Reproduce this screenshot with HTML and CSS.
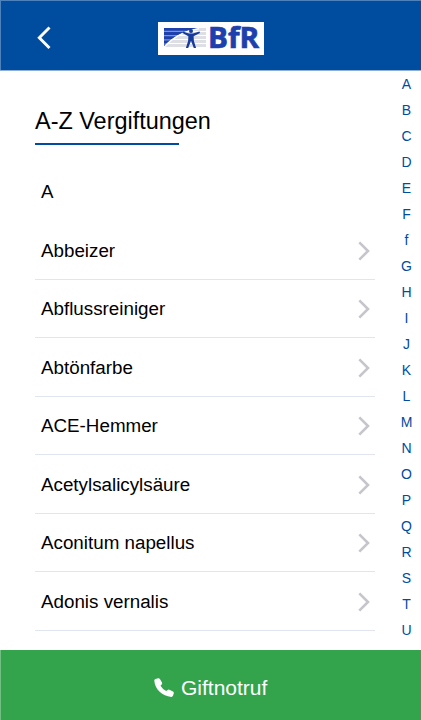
FILE: index.html
```html
<!DOCTYPE html>
<html lang="de">
<head>
<meta charset="utf-8">
<title>A-Z Vergiftungen</title>
<link rel="stylesheet" href="styles.css">
</head>
<body>
<div class="app">
  <header class="header">
    <svg class="back" viewBox="0 0 14 24"><path d="M12.5 1.5 2.3 11.7 12.5 22"/></svg>
    <svg class="logo" viewBox="0 0 106 33">
      <defs><clipPath id="arc"><path d="M6 6H40C26 8.500 14 15 6 24.500Z"/></clipPath></defs>
      <rect width="106" height="33" fill="#fff"/>
      <path d="M6 7.500h42M6 11.500h42M6 15.500h42M6 19.500h42M6 23.500h42" stroke="#dddfe4" stroke-width="3"/>
      <g clip-path="url(#arc)">
        <path d="M6 6h40v20H6z" fill="#7d94d2"/>
        <path d="M6 7.300h42M6 11.500h42M6 15.700h42M6 19.900h42M6 24h42" stroke="#1d40ad" stroke-width="3"/>
      </g>
      <path d="M6 25.200C14 15.800 26 9.300 41 6.600" fill="none" stroke="#fff" stroke-width="1.300"/>
      <g fill="#173b9c">
        <circle cx="33" cy="9" r="2"/>
        <path d="M25 9.500 31 11.500h4l6.500-2 .5 1.500-6.400 3.200.3 4.800 2.200 7h-2.300l-2.800-7.200-2.800 7.200h-2.300l2.200-7 .3-4.800-5.900-3.200Z"/>
      </g>
      <text class="logo-text" x="50" y="26" textLength="51" lengthAdjust="spacingAndGlyphs">BfR</text>
    </svg>
  </header>
  <main class="main">
    <section class="content">
      <h1 class="title">A-Z Vergiftungen</h1>
      <h2 class="letter">A</h2>
      <ul class="list">
        <li class="row"><span>Abbeizer</span><svg class="chevron" viewBox="0 0 12 20"><path d="m1.3 1.3 8.7 8.7-8.7 8.7"/></svg></li>
        <li class="row"><span>Abflussreiniger</span><svg class="chevron" viewBox="0 0 12 20"><path d="m1.3 1.3 8.7 8.7-8.7 8.7"/></svg></li>
        <li class="row"><span>Abtönfarbe</span><svg class="chevron" viewBox="0 0 12 20"><path d="m1.3 1.3 8.7 8.7-8.7 8.7"/></svg></li>
        <li class="row"><span>ACE-Hemmer</span><svg class="chevron" viewBox="0 0 12 20"><path d="m1.3 1.3 8.7 8.7-8.7 8.7"/></svg></li>
        <li class="row"><span>Acetylsalicylsäure</span><svg class="chevron" viewBox="0 0 12 20"><path d="m1.3 1.3 8.7 8.7-8.7 8.7"/></svg></li>
        <li class="row"><span>Aconitum napellus</span><svg class="chevron" viewBox="0 0 12 20"><path d="m1.3 1.3 8.7 8.7-8.7 8.7"/></svg></li>
        <li class="row"><span>Adonis vernalis</span><svg class="chevron" viewBox="0 0 12 20"><path d="m1.3 1.3 8.7 8.7-8.7 8.7"/></svg></li>
      </ul>
    </section>
    <nav class="index">
      <span>A</span><span>B</span><span>C</span><span>D</span><span>E</span><span>F</span><span>f</span><span>G</span><span>H</span><span>I</span><span>J</span><span>K</span><span>L</span><span>M</span><span>N</span><span>O</span><span>P</span><span>Q</span><span>R</span><span>S</span><span>T</span><span>U</span>
    </nav>
  </main>
  <footer class="call">
    <svg class="phone" viewBox="0 0 20 20"><path d="M1.500 1 4 .2Q5.200 0 5.900 1L8 4.500Q8.500 5.600 7.700 6.400L6.500 7.700Q8.500 11.200 12.200 12.900L13.700 11.900Q14.500 11.400 15.400 11.800L19 13.500Q20 14.200 19.800 15.200L19 17.800Q18.500 18.900 17.300 18.900C8.500 18.500.8 11.500.3 2.600Q.3 1.400 1.500 1Z"/></svg>
    <span>Giftnotruf</span>
  </footer>
</div>
</body>
</html>
```

FILE: styles.css
```css
* { box-sizing: border-box; }
body {
  margin: 0;
  background: #fff;
  color: #000;
  font-family: "Liberation Sans", Arial, sans-serif;
}
.app {
  display: flex;
  flex-direction: column;
  height: 720px;
  overflow: hidden;
}
.header {
  flex: none;
  display: flex;
  align-items: flex-start;
  height: 70px;
  padding: 22px 0 0 37px;
  background: #004c9f;
  box-shadow: inset 1px 1px #4d82bc, 0 1px #8fb0d5;
}
.back {
  width: 14px;
  height: 24px;
  margin-top: 4px;
}
.back path {
  fill: none;
  stroke: #fff;
  stroke-width: 2.9;
}
.logo {
  width: 106px;
  height: 33px;
  margin-left: 107px;
  overflow: visible;
}
.logo-text {
  font-family: "Open Sans", "Liberation Sans", sans-serif;
  font-size: 27.8px;
  font-weight: bold;
  fill: #1d40ad;
  stroke: #1d40ad;
  stroke-width: .7px;
}
.main {
  flex: 1;
  min-height: 0;
  display: flex;
  justify-content: space-between;
  padding-top: 1px;
  overflow: hidden;
}
.content {
  width: 340px;
  margin-left: 35px;
}
.title {
  position: relative;
  margin: 36px 0 0;
  height: 38px;
  font-size: 23.45px;
  line-height: 28px;
  font-weight: normal;
  white-space: nowrap;
}
.title::after {
  content: "";
  position: absolute;
  left: 0;
  bottom: 0;
  width: 144px;
  height: 2.4px;
  background: #004c9f;
}
.letter {
  margin: 36px 0 0;
  padding-left: 6px;
  height: 40px;
  font-size: 18.7px;
  line-height: 22px;
  font-weight: normal;
}
.list {
  margin: 0;
  padding: 0;
  list-style: none;
}
.row {
  display: flex;
  align-items: center;
  justify-content: space-between;
  height: 58.55px;
  padding: 1.5px 5px 0 6px;
  border-bottom: 1px solid #e0e5f0;
  font-size: 18.8px;
}
.chevron {
  width: 12px;
  height: 20px;
}
.chevron path {
  fill: none;
  stroke: #c5c5cb;
  stroke-width: 2.6;
}
.index {
  width: 29px;
  display: flex;
  flex-direction: column;
  color: #004c9f;
  font-size: 14px;
  line-height: 26px;
  text-align: center;
}
.call {
  flex: none;
  display: flex;
  align-items: center;
  height: 70px;
  padding: 5px 0 0 154px;
  gap: 7px;
  background: #34a44c;
  box-shadow: inset 1px 0 #71bf82;
  color: #fff;
  font-size: 21px;
}
.phone {
  width: 20px;
  height: 20px;
  fill: #fff;
}
```
